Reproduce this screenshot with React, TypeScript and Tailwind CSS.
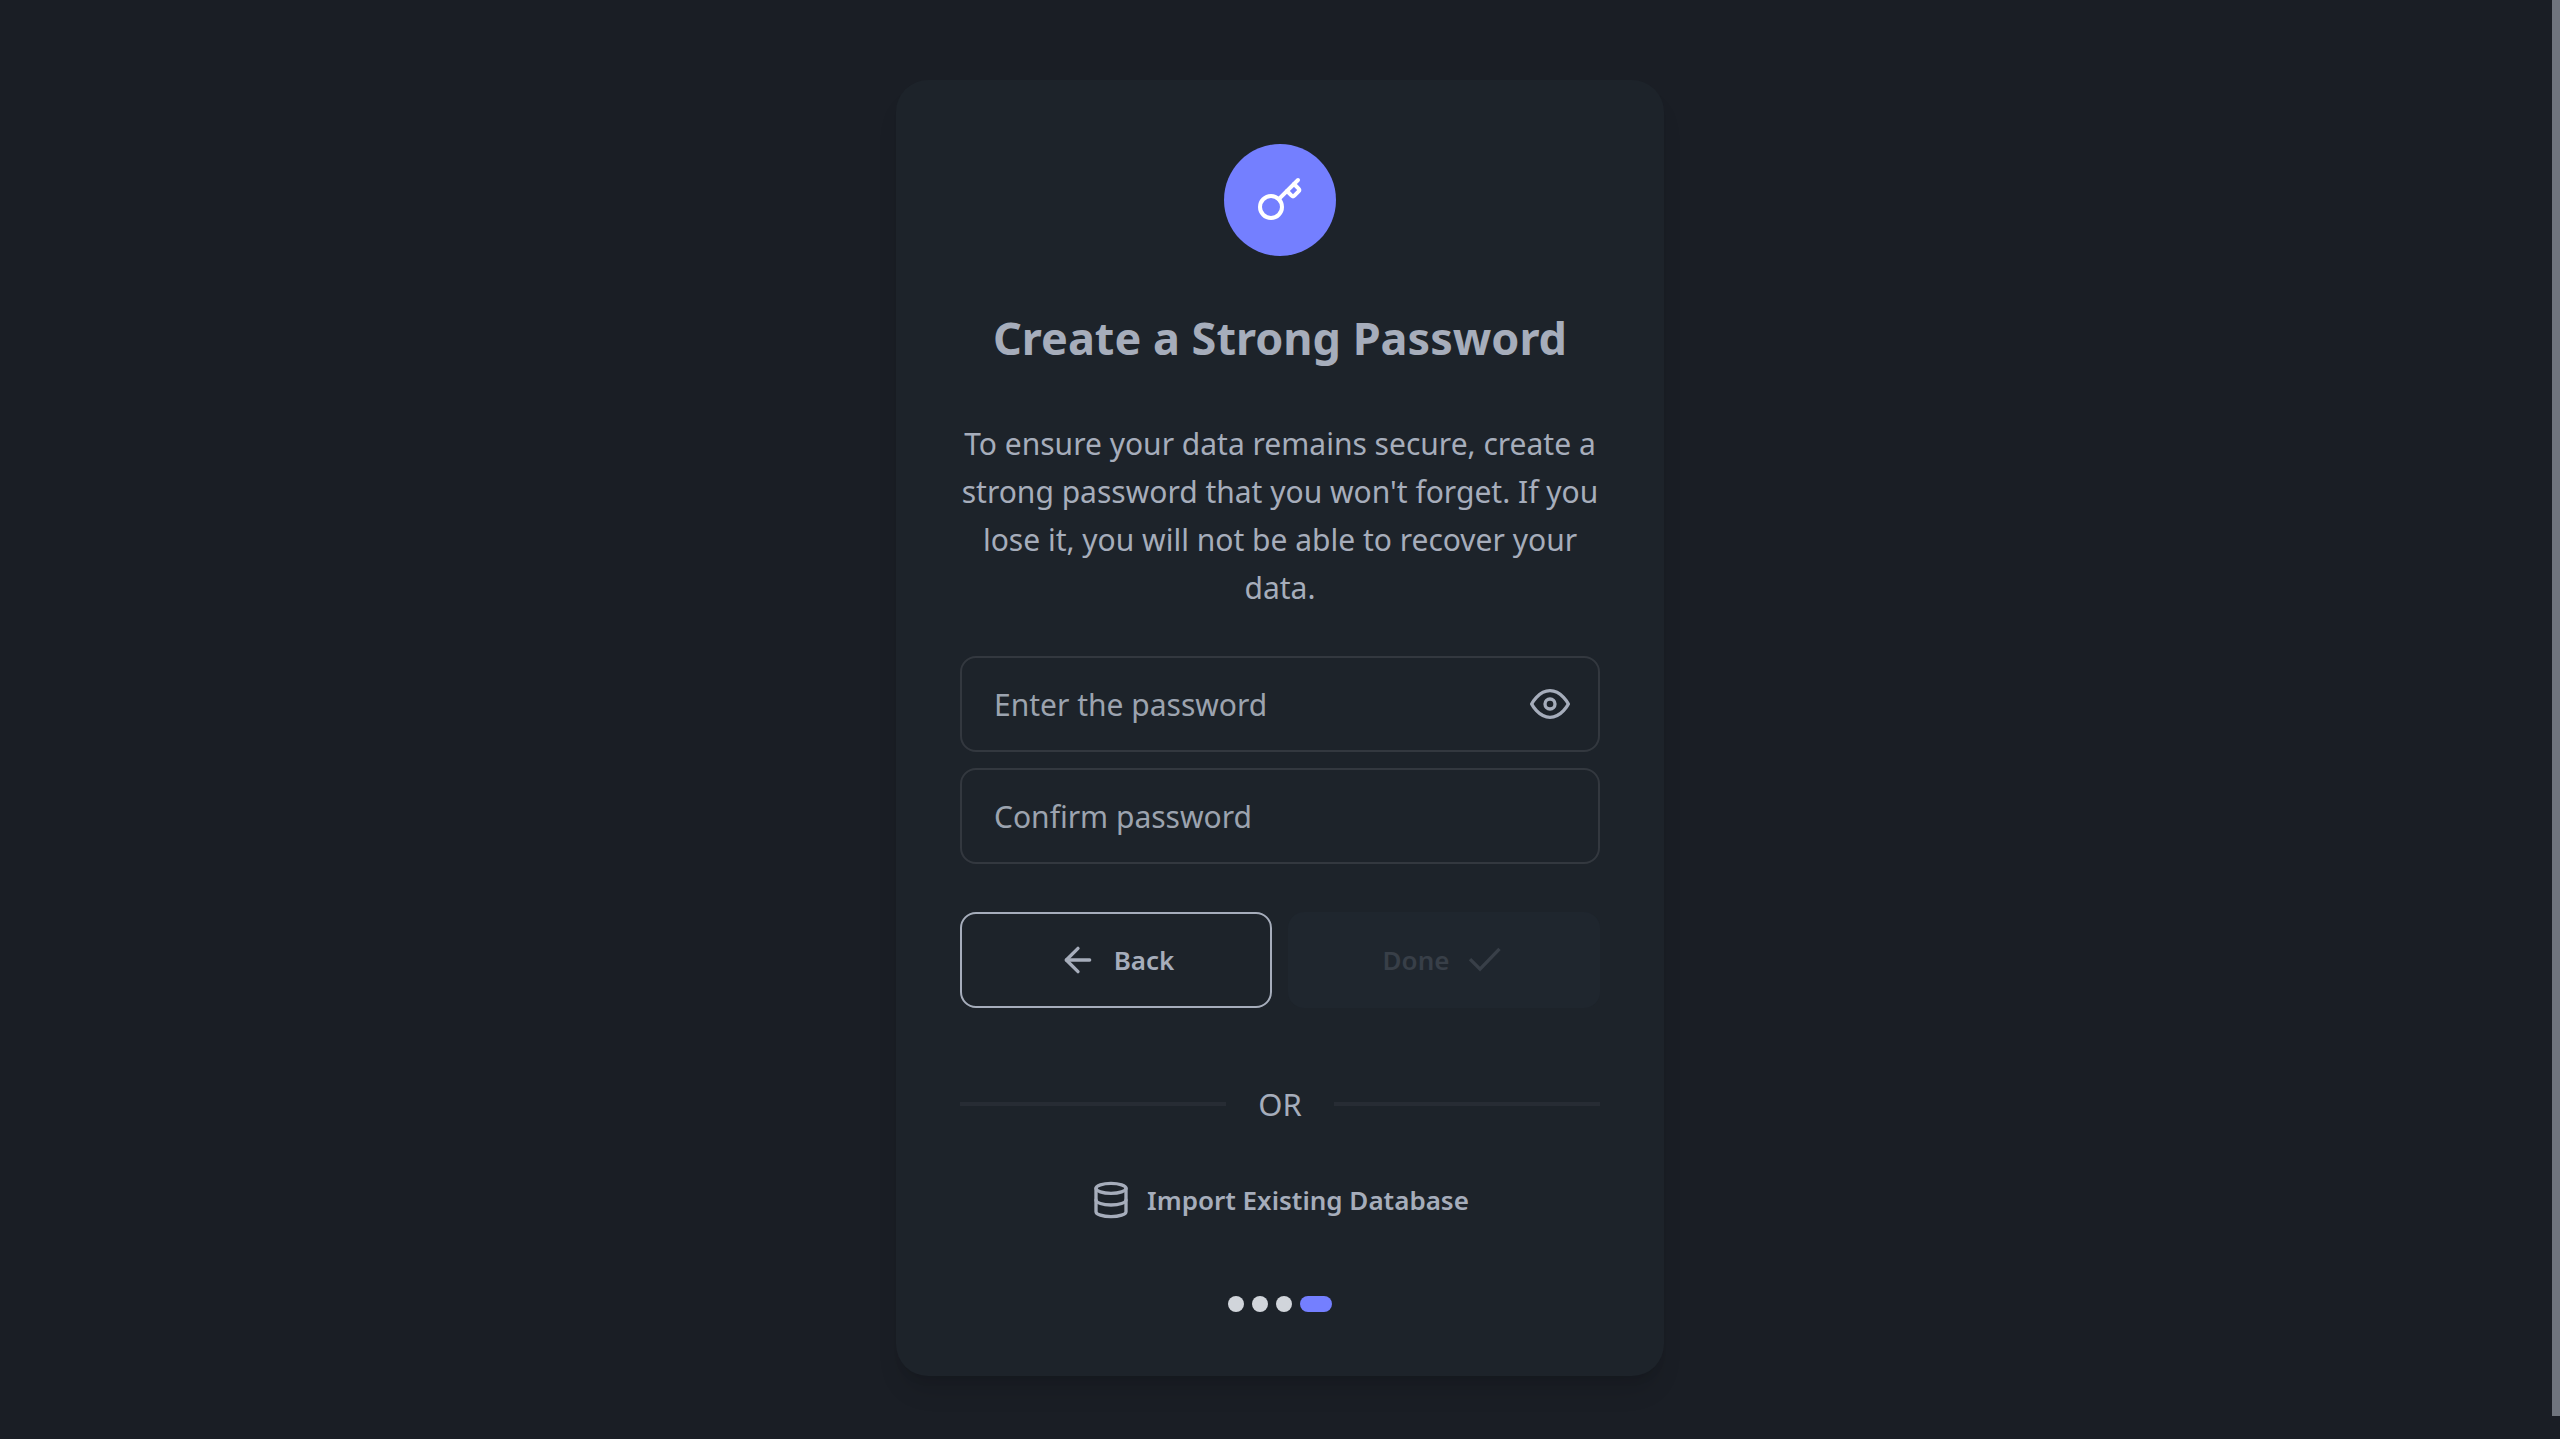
import { ArrowLeft, Database, Key } from "lucide-react";

function EyeIcon() {
  return (
    <svg aria-hidden="true" className="size-10" viewBox="0 0 24 24" fill="none" stroke="currentColor" strokeWidth="2" strokeLinecap="round" strokeLinejoin="round">
      <path d="M1 12s4-8 11-8 11 8 11 8-4 8-11 8-11-8-11-8z" />
      <circle cx="12" cy="12" r="3" />
    </svg>
  );
}

function CheckIcon() {
  return (
    <svg aria-hidden="true" className="size-10" viewBox="0 0 24 24" fill="none" stroke="currentColor" strokeWidth="2">
      <path d="M3 11.5 9 17.5 20.7 5.3" />
    </svg>
  );
}

export default function App() {
  return (
    <div className="flex min-h-screen items-start bg-[#1a1e25] font-['Noto_Sans','Open_Sans',sans-serif] text-[#a6adbb]">
      <main className="flex flex-1 justify-center py-20 pl-2">
        <section className="flex w-full max-w-3xl flex-col rounded-4xl bg-[#1d232a] p-16 shadow-xl">
          <div className="flex size-28 items-center justify-center self-center rounded-full bg-[#747fff] text-white">
            <Key className="size-12" />
          </div>
          <h1 className="mt-12 text-center text-[45px] leading-[68px] font-bold">Create a Strong Password</h1>
          <p className="mt-12 text-center text-[30px] leading-[48px]">
            To ensure your data remains secure, create a strong password that you won't forget. If you lose it, you will not be able to recover your data.
          </p>
          <form className="mt-11 flex flex-col gap-4">
            <div className="flex h-24 items-center rounded-2xl border-2 border-[#33383f] pr-7 pl-8">
              <input type="password" aria-label="Password" placeholder="Enter the password" className="min-w-0 flex-1 bg-transparent text-[30px] outline-none placeholder:text-[#9ca3af]" />
              <button type="button" aria-label="Show password"><EyeIcon /></button>
            </div>
            <input type="password" aria-label="Confirm password" placeholder="Confirm password" className="h-24 rounded-2xl border-2 border-[#33383f] bg-transparent px-8 text-[30px] outline-none placeholder:text-[#9ca3af]" />
            <div className="mt-8 grid grid-cols-2 gap-4 text-[26px] font-semibold">
              <button type="button" className="flex h-24 items-center justify-center gap-4 rounded-2xl border-2 border-[#a6adbb]">
                <ArrowLeft className="size-10" />Back
              </button>
              <button type="submit" disabled className="flex h-24 items-center justify-center gap-4 rounded-2xl bg-[#1f262e] text-[#383f48]">
                Done<CheckIcon />
              </button>
            </div>
          </form>
          <div className="mt-16 flex items-center gap-8 text-[31px] leading-[64px]">
            <span className="h-1 flex-1 bg-[#272c34]" />OR<span className="h-1 flex-1 bg-[#272c34]" />
          </div>
          <button type="button" className="mt-4 flex h-24 items-center justify-center gap-4 text-[26px] font-semibold">
            <Database className="size-10" />Import Existing Database
          </button>
          <div className="mt-12 flex justify-center gap-2">
            <span className="size-4 rounded-full bg-[#d1d5db]" />
            <span className="size-4 rounded-full bg-[#d1d5db]" />
            <span className="size-4 rounded-full bg-[#d1d5db]" />
            <span className="h-4 w-8 rounded-full bg-[#747fff]" />
          </div>
        </section>
      </main>
      <div className="h-[calc(100vh-23px)] w-2 bg-[#6f747d]" />
    </div>
  );
}
